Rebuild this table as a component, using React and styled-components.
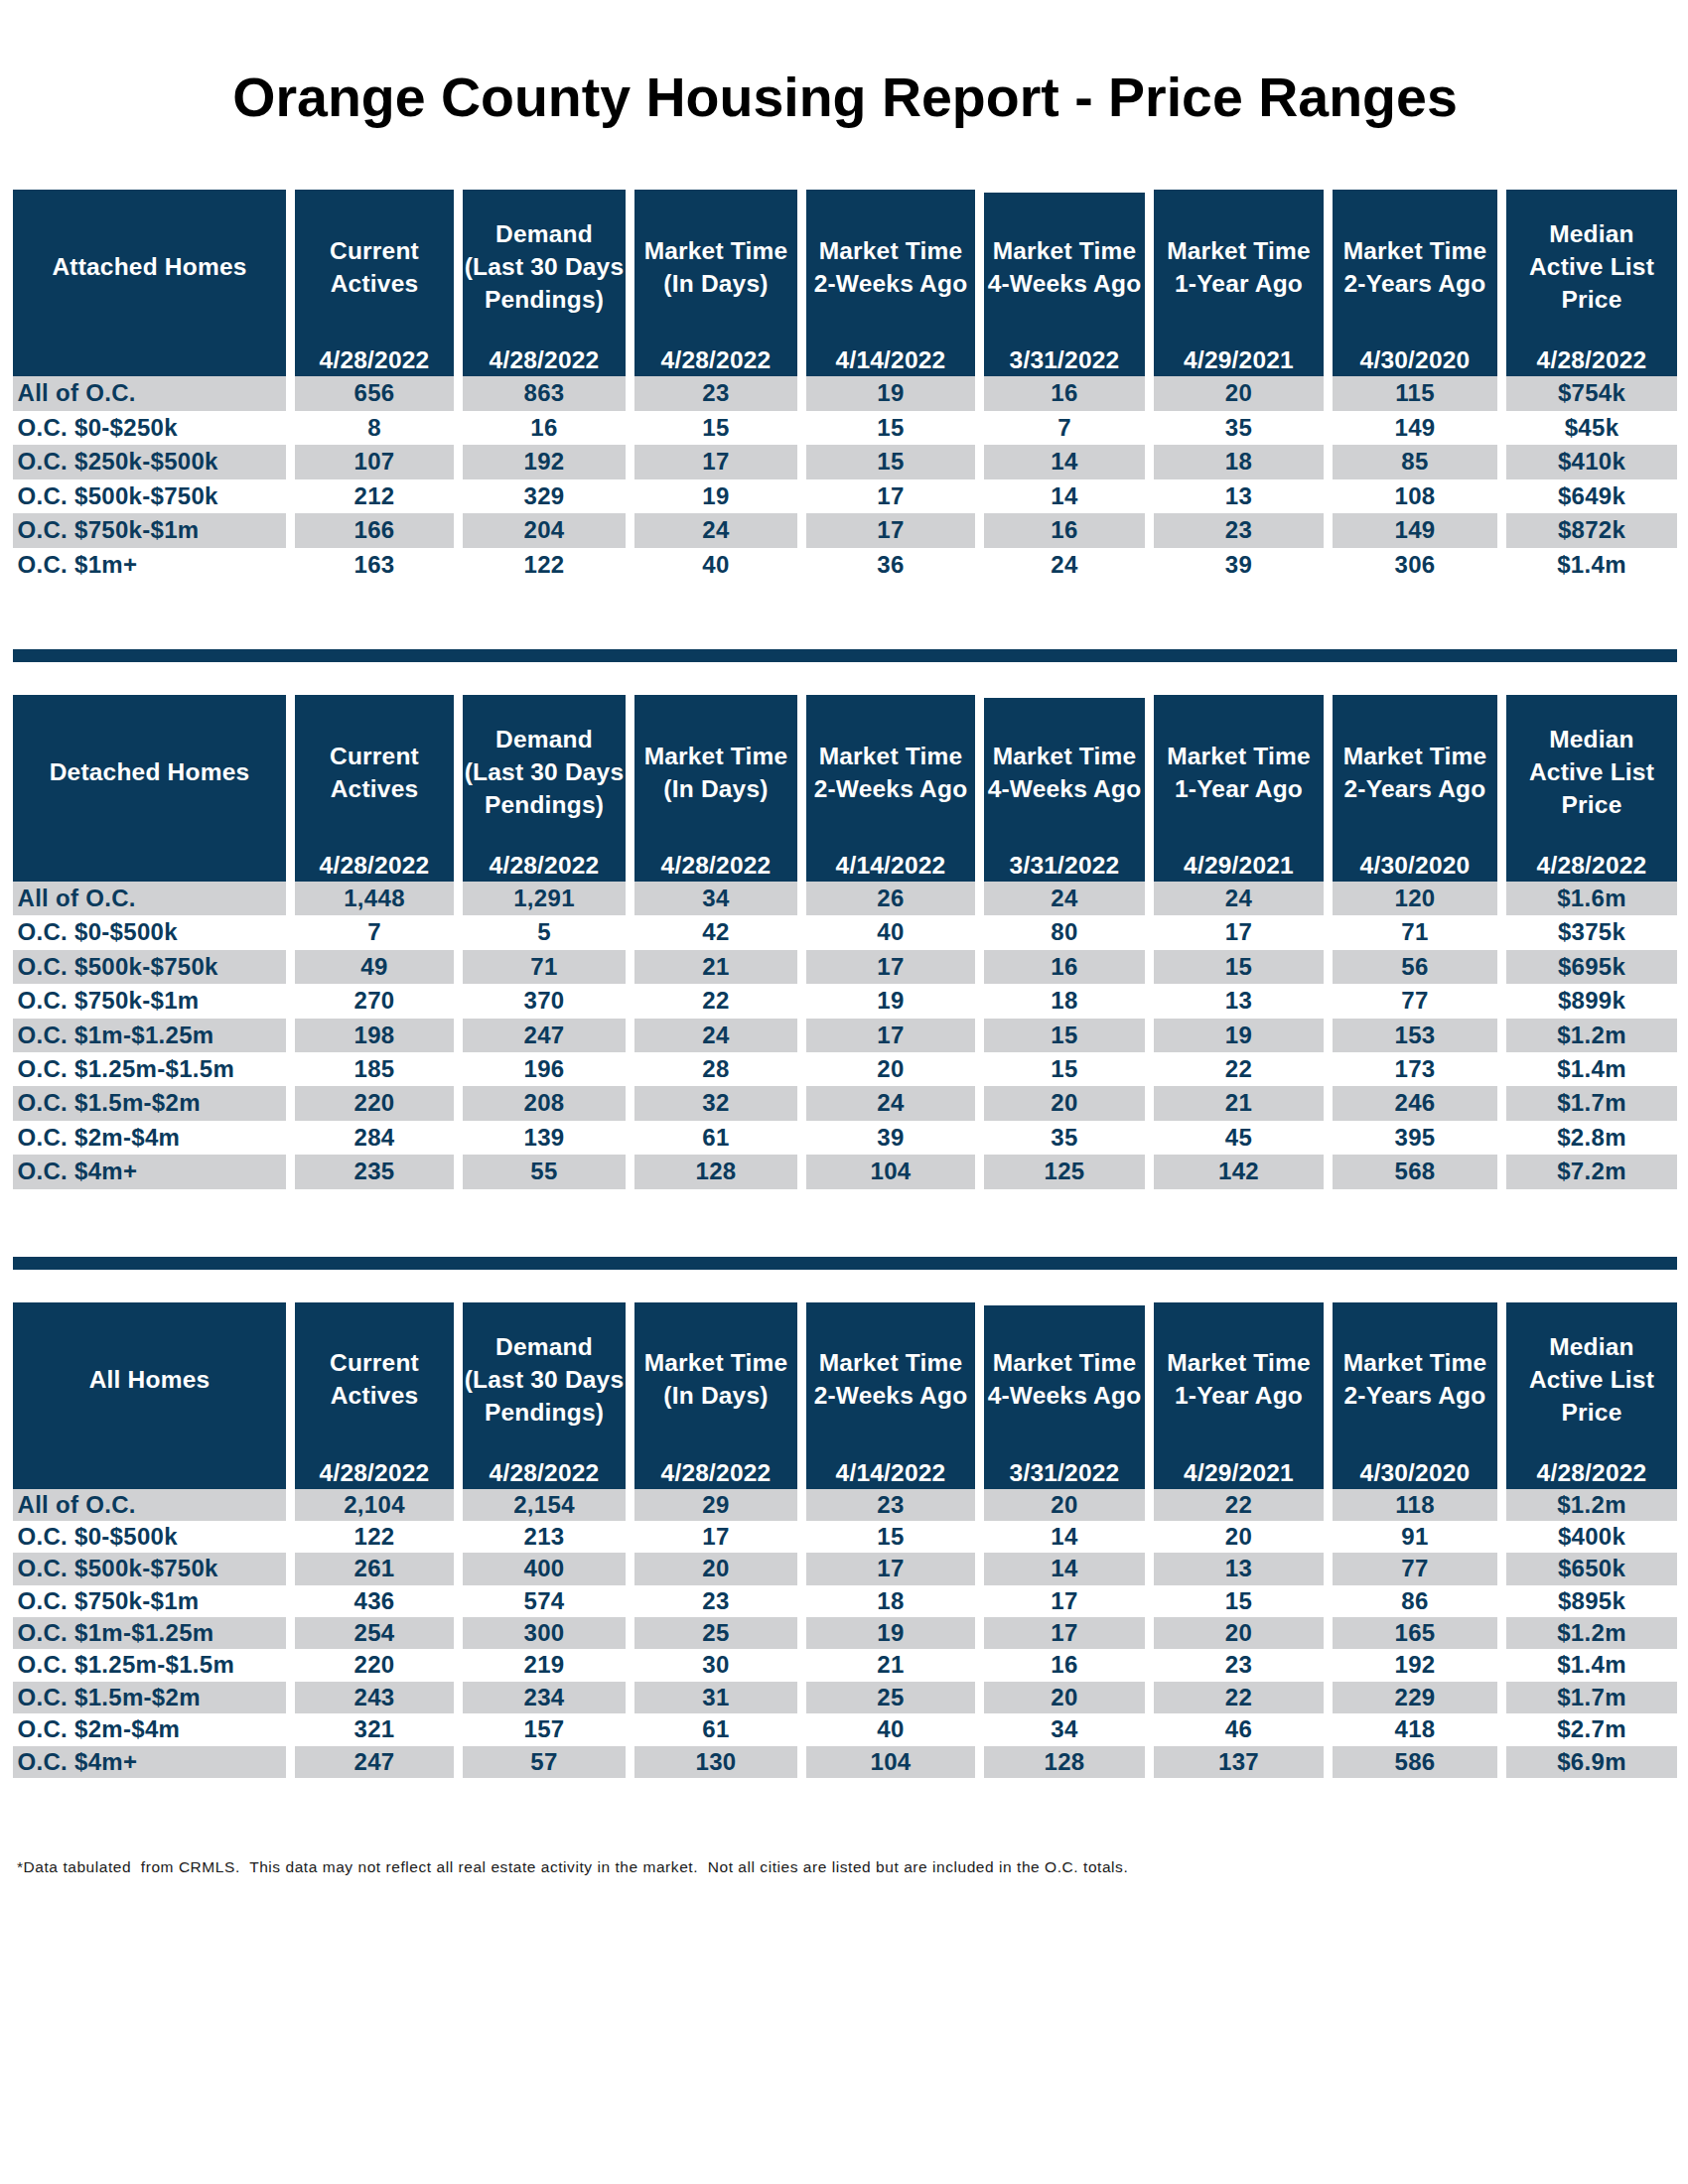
import React from 'react'
import styled, { createGlobalStyle } from 'styled-components'

const GlobalStyle = createGlobalStyle`
    body {
        margin: 0;
        background: #fff;
        font-family: "Liberation Sans", Arial, sans-serif;
    }
`

const NAVY = '#0a3a5c'
const GRAY = '#d0d1d3'
const COLS = '275px 160px 164px 164px 170px 162px 171px 166px 172px'

const Page = styled.div`
    width: 1676px;
    padding: 70px 0 0 13px;
`

const Title = styled.h1`
    margin: 0 0 65px;
    font-size: 55.5px;
    line-height: 56px;
    font-weight: 700;
    color: #000;
    text-align: center;
`

const Table = styled.div`
    display: grid;
    grid-template-columns: ${COLS};
    column-gap: 9px;
`

// the 4-weeks column sits a few pixels lower in the source
const HeadCell = styled.div`
    display: flex;
    flex-direction: column;
    height: ${props => props.$dip ? 185 : 188}px;
    margin-top: ${props => props.$dip ? 3 : 0}px;
    background: ${NAVY};
    color: #fff;
    font-size: 24.5px;
    line-height: 33px;
    font-weight: 700;
    letter-spacing: 0.2px;
    text-align: center;
    white-space: nowrap;
`

const HeadLabel = styled.div`
    flex: 1;
    display: flex;
    flex-direction: column;
    justify-content: center;
    align-items: center;
    margin-top: ${props => props.$dip ? -3 : 0}px;
`

const HeadDate = styled.div`
    height: 33px;
`

const Cell = styled.div`
    height: ${props => props.$h}px;
    line-height: ${props => props.$h}px;
    background: ${props => props.$shade ? GRAY : 'transparent'};
    color: ${NAVY};
    font-size: 24px;
    font-weight: 700;
    letter-spacing: 0.3px;
    text-align: ${props => props.$left ? 'left' : 'center'};
    padding-left: ${props => props.$left ? '4.5px' : '0'};
    white-space: nowrap;
`

const Bar = styled.div`
    height: 13px;
    background: ${NAVY};
    margin: 68px 0 33px;
`

const Note = styled.p`
    margin: 81px 0 0 4px;
    font-size: 15.5px;
    line-height: 17px;
    letter-spacing: 0.55px;
    color: #1a1a1a;
    white-space: pre;
`

const columns = [
    { lines: ['Current', 'Actives'], date: '4/28/2022' },
    { lines: ['Demand', '(Last 30 Days', 'Pendings)'], date: '4/28/2022' },
    { lines: ['Market Time', '(In Days)'], date: '4/28/2022' },
    { lines: ['Market Time', '2-Weeks Ago'], date: '4/14/2022' },
    { lines: ['Market Time', '4-Weeks Ago'], date: '3/31/2022', dip: true },
    { lines: ['Market Time', '1-Year Ago'], date: '4/29/2021' },
    { lines: ['Market Time', '2-Years Ago'], date: '4/30/2020' },
    { lines: ['Median', 'Active List', 'Price'], date: '4/28/2022' },
]

const sections = [
    {
        title: 'Attached Homes',
        rowH: 34.5,
        rows: [
            ['All of O.C.', '656', '863', '23', '19', '16', '20', '115', '$754k'],
            ['O.C. $0-$250k', '8', '16', '15', '15', '7', '35', '149', '$45k'],
            ['O.C. $250k-$500k', '107', '192', '17', '15', '14', '18', '85', '$410k'],
            ['O.C. $500k-$750k', '212', '329', '19', '17', '14', '13', '108', '$649k'],
            ['O.C. $750k-$1m', '166', '204', '24', '17', '16', '23', '149', '$872k'],
            ['O.C. $1m+', '163', '122', '40', '36', '24', '39', '306', '$1.4m'],
        ],
    },
    {
        title: 'Detached Homes',
        rowH: 34.4,
        rows: [
            ['All of O.C.', '1,448', '1,291', '34', '26', '24', '24', '120', '$1.6m'],
            ['O.C. $0-$500k', '7', '5', '42', '40', '80', '17', '71', '$375k'],
            ['O.C. $500k-$750k', '49', '71', '21', '17', '16', '15', '56', '$695k'],
            ['O.C. $750k-$1m', '270', '370', '22', '19', '18', '13', '77', '$899k'],
            ['O.C. $1m-$1.25m', '198', '247', '24', '17', '15', '19', '153', '$1.2m'],
            ['O.C. $1.25m-$1.5m', '185', '196', '28', '20', '15', '22', '173', '$1.4m'],
            ['O.C. $1.5m-$2m', '220', '208', '32', '24', '20', '21', '246', '$1.7m'],
            ['O.C. $2m-$4m', '284', '139', '61', '39', '35', '45', '395', '$2.8m'],
            ['O.C. $4m+', '235', '55', '128', '104', '125', '142', '568', '$7.2m'],
        ],
    },
    {
        title: 'All Homes',
        rowH: 32.4,
        rows: [
            ['All of O.C.', '2,104', '2,154', '29', '23', '20', '22', '118', '$1.2m'],
            ['O.C. $0-$500k', '122', '213', '17', '15', '14', '20', '91', '$400k'],
            ['O.C. $500k-$750k', '261', '400', '20', '17', '14', '13', '77', '$650k'],
            ['O.C. $750k-$1m', '436', '574', '23', '18', '17', '15', '86', '$895k'],
            ['O.C. $1m-$1.25m', '254', '300', '25', '19', '17', '20', '165', '$1.2m'],
            ['O.C. $1.25m-$1.5m', '220', '219', '30', '21', '16', '23', '192', '$1.4m'],
            ['O.C. $1.5m-$2m', '243', '234', '31', '25', '20', '22', '229', '$1.7m'],
            ['O.C. $2m-$4m', '321', '157', '61', '40', '34', '46', '418', '$2.7m'],
            ['O.C. $4m+', '247', '57', '130', '104', '128', '137', '586', '$6.9m'],
        ],
    },
]

function Section({ title, rows, rowH }) {
    return (
        <Table>
            <HeadCell>
                <HeadLabel>{title}</HeadLabel>
                <HeadDate />
            </HeadCell>
            {columns.map((c, i) => (
                <HeadCell key={i} $dip={c.dip}>
                    <HeadLabel $dip={c.dip}>
                        {c.lines.map(l => <div key={l}>{l}</div>)}
                    </HeadLabel>
                    <HeadDate>{c.date}</HeadDate>
                </HeadCell>
            ))}
            {rows.map((row, r) =>
                row.map((v, i) => (
                    <Cell key={r + '-' + i} $h={rowH} $shade={r % 2 === 0} $left={i === 0}>
                        {v}
                    </Cell>
                ))
            )}
        </Table>
    )
}

export default function App() {
    return (
        <Page>
            <GlobalStyle />
            <Title>Orange County Housing Report - Price Ranges</Title>
            {sections.map((s, i) => (
                <React.Fragment key={s.title}>
                    {i > 0 && <Bar />}
                    <Section {...s} />
                </React.Fragment>
            ))}
            <Note>{'*Data tabulated  from CRMLS.  This data may not reflect all real estate activity in the market.  Not all cities are listed but are included in the O.C. totals.'}</Note>
        </Page>
    )
}
